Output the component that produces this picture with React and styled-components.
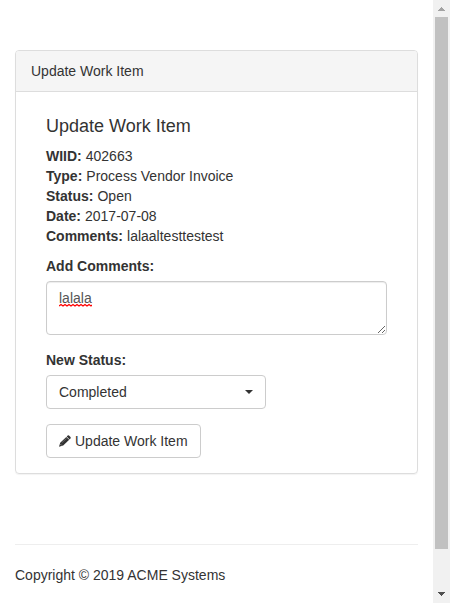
import React from "react";
import styled, { createGlobalStyle } from "styled-components";

const GlobalStyle = createGlobalStyle`
  *, *::before, *::after { box-sizing: border-box; }
  body {
    margin: 0;
    background: #fff;
    color: #333;
    font: 14px/20px "Liberation Sans", Arial, sans-serif;
  }
`;

const Shell = styled.div`
  display: flex;
  height: 100vh;
`;

const Page = styled.div`
  flex: 1;
  min-width: 0;
  padding: 50px 15px 0;
  overflow-y: auto;
  scrollbar-width: none;
`;

const Panel = styled.main`
  border: 1px solid #ddd;
  border-radius: 4px;
  box-shadow: 0 1px 1px rgba(0, 0, 0, 0.05);
`;

const PanelHeading = styled.header`
  padding: 10px 15px;
  background: #f5f5f5;
  border-bottom: 1px solid #ddd;
  border-radius: 3px 3px 0 0;
`;

const PanelBody = styled.div`
  padding: 24px 30px 15px;
`;

const Title = styled.h4`
  margin: 0 0 10px;
  font-size: 18px;
  line-height: 20px;
  font-weight: 400;
`;

const Details = styled.dl`
  margin: 0 0 10px;
`;

const Detail = styled.div`
  display: flex;
  gap: 4px;
`;

const Term = styled.dt`
  font-weight: 700;
`;

const Value = styled.dd`
  margin: 0;
`;

const Form = styled.form`
  display: grid;
  gap: 15px;
  justify-items: start;
`;

const Field = styled.div`
  width: ${(p) => (p.$width ? p.$width : "100%")};
  max-width: 100%;
`;

const Label = styled.label`
  display: block;
  margin-bottom: 5px;
  font-weight: 700;
`;

const Control = styled.div`
  position: relative;
`;

const TextArea = styled.textarea`
  display: block;
  width: 100%;
  height: 54px;
  padding: 6px 12px;
  border: 1px solid #ccc;
  border-radius: 4px;
  box-shadow: inset 0 1px 1px rgba(0, 0, 0, 0.075);
  color: #555;
  background: #fff;
  font: inherit;
  resize: vertical;
`;

const SpellingMark = styled.svg`
  position: absolute;
  left: 13px;
  top: 22px;
  pointer-events: none;
`;

const Select = styled.select`
  display: block;
  width: 100%;
  height: 34px;
  padding: 0 12px;
  border: 1px solid #ccc;
  border-radius: 4px;
  background: #fff;
  color: #333;
  font: inherit;
  appearance: none;
`;

const Caret = styled.svg`
  position: absolute;
  right: 13px;
  top: 15px;
  pointer-events: none;
`;

const Button = styled.button`
  display: inline-flex;
  align-items: center;
  gap: 4px;
  height: 34px;
  padding: 0 12px;
  border: 1px solid #ccc;
  border-radius: 4px;
  background: #fff;
  color: #333;
  font: inherit;
`;

const Footer = styled.footer`
  margin-top: 70px;
  padding: 20px 0;
  border-top: 1px solid #eee;
`;

const ScrollBar = styled.div`
  display: flex;
  flex-direction: column;
  flex: none;
  width: 17px;
  background: #f1f1f1;
`;

const ScrollArrow = styled.svg`
  display: block;
  flex: none;
`;

const ScrollTrack = styled.div`
  flex: 1;
  padding: 0 2px;
`;

const ScrollThumb = styled.div`
  height: 93.5%;
  background: #c1c1c1;
`;

const details = [
  ["WIID:", "402663"],
  ["Type:", "Process Vendor Invoice"],
  ["Status:", "Open"],
  ["Date:", "2017-07-08"],
  ["Comments:", "lalaaltesttestest"],
];

export default function App() {
  return (
    <Shell>
      <GlobalStyle />
      <Page>
        <Panel>
          <PanelHeading>Update Work Item</PanelHeading>
          <PanelBody>
            <Title>Update Work Item</Title>
            <Details>
              {details.map(([term, value]) => (
                <Detail key={term}>
                  <Term>{term}</Term>
                  <Value>{value}</Value>
                </Detail>
              ))}
            </Details>
            <Form onSubmit={(e) => e.preventDefault()}>
              <Field>
                <Label htmlFor="comments">Add Comments:</Label>
                <Control>
                  <TextArea id="comments" defaultValue="lalala" />
                  <SpellingMark width="33" height="4" aria-hidden="true">
                    <path
                      d="M0 3L2 1.500L4 3L6 1.500L8 3L10 1.500L12 3L14 1.500L16 3L18 1.500L20 3L22 1.500L24 3L26 1.500L28 3L30 1.500L32 3L33 2"
                      fill="none"
                      stroke="#f00"
                      strokeWidth="1.2"
                    />
                  </SpellingMark>
                </Control>
              </Field>
              <Field $width="220px">
                <Label htmlFor="status">New Status:</Label>
                <Control>
                  <Select id="status" defaultValue="Completed">
                    <option>Open</option>
                    <option>Completed</option>
                    <option>Rejected</option>
                  </Select>
                  <Caret width="8" height="4" aria-hidden="true">
                    <path d="M0 0H8L4 4Z" fill="#333" />
                  </Caret>
                </Control>
              </Field>
              <Button type="submit">
                <svg width="12" height="12" viewBox="0 0 12 12" aria-hidden="true">
                  <path
                    d="M8.700 .5Q9.400 0 10 .6L11.500 2.100Q12 2.800 11.500 3.500L10.600 4.400L7.700 1.500ZM7.300 1.900L10.200 4.800L4.200 10.600L0 11.700L1.200 7.700Z"
                    fill="#333"
                  />
                  <path d="M2.800 7.800L7.500 3.400" stroke="#888" strokeWidth=".6" />
                  <path d="M1.500 9.200L2.700 10.400" stroke="#ddd" strokeWidth=".6" />
                </svg>
                Update Work Item
              </Button>
            </Form>
          </PanelBody>
        </Panel>
        <Footer>Copyright © 2019 ACME Systems</Footer>
      </Page>
      <ScrollBar aria-hidden="true">
        <ScrollArrow width="17" height="17" shapeRendering="crispEdges">
          <path d="M5 11H12L8.500 7Z" fill="#a3a3a3" />
        </ScrollArrow>
        <ScrollTrack>
          <ScrollThumb />
        </ScrollTrack>
        <ScrollArrow width="17" height="17" shapeRendering="crispEdges">
          <path d="M5 6H12L8.500 10Z" fill="#505050" />
        </ScrollArrow>
      </ScrollBar>
    </Shell>
  );
}
